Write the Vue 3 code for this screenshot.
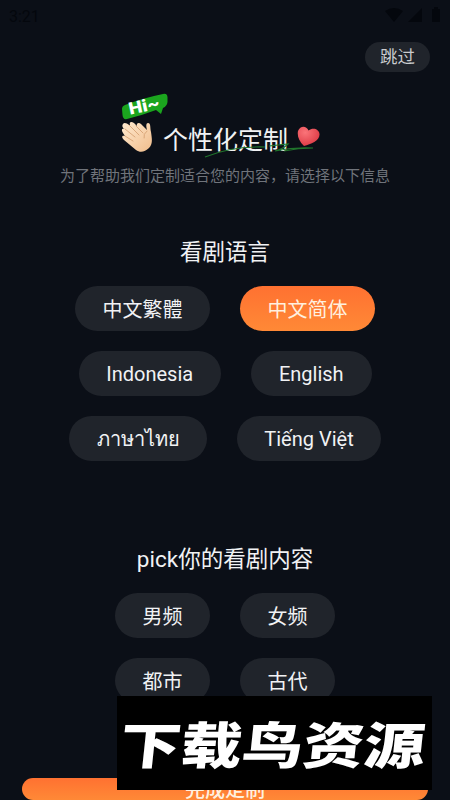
<script setup>
const languages = [
  [{ label: '中文繁體', width: 135 }, { label: '中文简体', width: 135, active: true }],
  [{ label: 'Indonesia', width: 142.5, latin: true }, { label: 'English', width: 120.5, latin: true }],
  [{ label: 'ภาษาไทย', width: 138, latin: true }, { label: 'Tiếng Việt', width: 144, latin: true }]
]
const genres = [
  [{ label: '男频' }, { label: '女频' }],
  [{ label: '都市' }, { label: '古代' }]
]
</script>

<template>
  <main class="screen">
    <header class="status">
      <span class="clock">3:21</span>
      <svg class="signals" width="58" height="16" viewBox="0 0 58 16">
        <path d="M1 4Q10 -2 19 4L10 15Z" />
        <path d="M38 1V15H24Z" />
        <path d="M48 2h2V0h4v2h2v13h-8Z" />
      </svg>
    </header>
    <div class="toolbar"><button class="skip">跳过</button></div>

    <section class="hero">
      <svg class="greeting" width="50" height="62" viewBox="0 0 50 62">
        <defs>
          <linearGradient id="skin" x1="0" y1="0" x2="1" y2="1">
            <stop offset="0" stop-color="#ffe9cf" />
            <stop offset="1" stop-color="#f0bd8c" />
          </linearGradient>
        </defs>
        <path d="M4 12Q22 5 42 1Q46 0 46.500 4V9Q46 13 42 15L40 21L35 17Q22 22 6 26Q2 27 1.500 22L1 16Q1 13 4 12Z" fill="#1ba51e" />
        <text class="hi" x="9" y="21.500" textLength="31" lengthAdjust="spacingAndGlyphs" transform="rotate(-12 10 21.500)">Hi~</text>
        <path d="M2 31C3 29 6 30 8 32L9 32C8 29 10 28 13 30L16 33C15 30 18 29 20 31L26 37C25 33 25 30 27 30C30 30 29 35 30 39C31 46 32 51 28 55C24 59 19 60 15 57L3 47C0 44 1 42 4 43L2 40C0 37 1 35 3 36C1 34 1 32 2 31Z" fill="url(#skin)" />
        <path d="M4 36L14 44M8 32L18 42M15 33L22 40M4 43L12 48M26 38Q22 41 23 45" fill="none" stroke="#d29c6d" stroke-width=".8" stroke-linecap="round" />
      </svg>
      <h1>个性化定制</h1>
      <svg class="heart" width="25" height="24" viewBox="0 0 25 24">
        <defs>
          <radialGradient id="love" cx=".35" cy=".3" r=".75">
            <stop offset="0" stop-color="#fa7479" />
            <stop offset="1" stop-color="#dc3944" />
          </radialGradient>
        </defs>
        <path d="M7 20C2 15 0 10 1 5C3 0 9 -1 11.500 4.500C16 1 22 3 22.500 8C23 15 14 18 7 20Z" fill="url(#love)" />
      </svg>
      <svg class="swoosh" width="112" height="18" viewBox="0 0 112 18">
        <path d="M1 14Q28 3 61 4M65 3L84 1Q79 6 71 8Q90 4 109 5Q94 5 80 8" fill="none" stroke="#20742c" stroke-width="1.100" />
      </svg>
    </section>
    <p class="intro">为了帮助我们定制适合您的内容，请选择以下信息</p>

    <section class="choices">
      <h2>看剧语言</h2>
      <div v-for="(row, i) in languages" :key="i" class="row">
        <button v-for="item in row" :key="item.label" class="pill" :class="{ active: item.active, latin: item.latin }" :style="{ width: item.width + 'px' }">{{ item.label }}</button>
      </div>
    </section>

    <section class="choices genres">
      <h2>pick你的看剧内容</h2>
      <div v-for="(row, i) in genres" :key="i" class="row">
        <button v-for="item in row" :key="item.label" class="pill short">{{ item.label }}</button>
      </div>
    </section>

    <button class="done">完成定制</button>
    <div class="watermark"><span>下载鸟资源</span></div>
  </main>
</template>

<style>
body { margin: 0; background: #0b0f17; }
</style>
<style scoped>
* { box-sizing: border-box; }
.screen { position: relative; width: 450px; height: 800px; overflow: hidden; background: #0b0f17; color: #f1f2f4; font-family: Roboto, "Noto Sans CJK SC", sans-serif; }
button { border: 0; padding: 0; font-family: inherit; color: inherit; }
.status { height: 42px; padding: 7px 8px 0 9px; display: flex; justify-content: space-between; color: #04070d; }
.clock { font-size: 16px; line-height: 19px; }
.signals { fill: #04070d; }
.toolbar { height: 30px; padding-right: 20px; display: flex; justify-content: flex-end; }
.skip { width: 65px; height: 30px; border-radius: 15px; background: #20242b; color: #c9cbce; font-size: 17.500px; line-height: 30px; }
.hero { position: relative; height: 90px; padding: 21px 0 0 121px; display: flex; align-items: flex-start; }
.hi { font: 900 17px Roboto, sans-serif; fill: #fff; }
h1 { margin: 30px 0 0 -8px; font-size: 25px; line-height: 36px; font-weight: 400; white-space: nowrap; }
.heart { margin: 33px 0 0 9px; }
.swoosh { position: absolute; left: 204px; top: 71px; }
.intro { margin: 0; height: 28px; text-align: center; font-size: 15px; line-height: 29px; color: #70747b; white-space: nowrap; }
.choices { display: flex; flex-direction: column; align-items: center; gap: 20px; padding-top: 43px; }
h2 { margin: 0; height: 34px; margin-bottom: -1px; font-size: 22.500px; line-height: 38px; font-weight: 400; }
.row { display: flex; justify-content: center; gap: 30px; }
.pill { height: 45px; border-radius: 23px; background: #20242b; font-size: 20px; line-height: 45px; padding-top: 2px; white-space: nowrap; }
.pill.latin { padding-top: 0; padding-bottom: 0; line-height: 46px; }
.pill.active { background: linear-gradient(#ff7131, #ff8936); color: #fff0df; }
.short { width: 95px; }
.genres { padding-top: 79px; }
.done { position: absolute; left: 22px; top: 778px; width: 406px; height: 22px; border-radius: 11px; background: linear-gradient(#ff7131, #ff8936); font-size: 20px; font-weight: 500; line-height: 22px; padding-top: 1px; color: #fff0df; white-space: nowrap; }
.watermark { position: absolute; left: 117px; top: 696px; width: 315px; height: 94px; background: #000; display: flex; align-items: center; justify-content: center; }
.watermark span { font: 900 50px/94px "Noto Sans CJK SC", sans-serif; color: #fff; white-space: nowrap; transform: translate(-2px, -1px) skewX(-6deg) scaleX(1.220); }
</style>
